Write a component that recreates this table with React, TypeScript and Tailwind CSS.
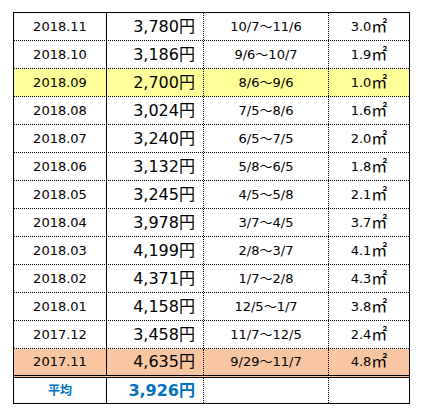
import React from "react";

type Row = { m: string; yen: string; range: string; area: string; bg?: string };

const rows: Row[] = [
  { m: "2018.11", yen: "3,780", range: "10/7～11/6", area: "3.0" },
  { m: "2018.10", yen: "3,186", range: "9/6～10/7", area: "1.9" },
  { m: "2018.09", yen: "2,700", range: "8/6～9/6", area: "1.0", bg: "y" },
  { m: "2018.08", yen: "3,024", range: "7/5～8/6", area: "1.6" },
  { m: "2018.07", yen: "3,240", range: "6/5～7/5", area: "2.0" },
  { m: "2018.06", yen: "3,132", range: "5/8～6/5", area: "1.8" },
  { m: "2018.05", yen: "3,245", range: "4/5～5/8", area: "2.1" },
  { m: "2018.04", yen: "3,978", range: "3/7～4/5", area: "3.7" },
  { m: "2018.03", yen: "4,199", range: "2/8～3/7", area: "4.1" },
  { m: "2018.02", yen: "4,371", range: "1/7～2/8", area: "4.3" },
  { m: "2018.01", yen: "4,158", range: "12/5～1/7", area: "3.8" },
  { m: "2017.12", yen: "3,458", range: "11/7～12/5", area: "2.4" },
  { m: "2017.11", yen: "4,635", range: "9/29～11/7", area: "4.8", bg: "o" },
];

export default function App() {
  return (
    <div className="w-[423px] h-[417px] bg-white pt-[12px] pl-[13px] font-['DejaVu_Sans','Noto_Sans_CJK_JP',sans-serif] text-black">
      <div className="w-[397px] border border-black">
        {rows.map((r, i) => {
          const last = i === rows.length - 1;
          const bg = r.bg === "y" ? "bg-[#ffff99]" : r.bg === "o" ? "bg-[#f8c6a0]" : "bg-white";
          return (
            <div
              key={r.m}
              className={`flex ${bg} ${last ? "h-[29px] border-b-[3px] border-double border-black" : "h-[28px] border-b border-dotted border-black"}`}
            >
              <div className="w-[93px] border-r border-black flex items-center justify-center text-[13px]">{r.m}</div>
              <div className="w-[97px] border-r border-dotted border-black flex items-center justify-end pr-[8px] text-[16px]">
                {r.yen}円
              </div>
              <div className="w-[125px] border-r border-dotted border-black flex items-center justify-center text-[13px]">
                {r.range}
              </div>
              <div className="flex-1 flex items-center justify-center text-[13px]">
                {r.area}
                <span className="text-[16px] leading-none">㎡</span>
              </div>
            </div>
          );
        })}
        <div className="flex h-[25px] bg-white">
          <div className="w-[93px] border-r border-black flex items-center justify-center text-[12px] font-bold text-[#0070c0]">平均</div>
          <div className="w-[97px] border-r border-dotted border-black flex items-center justify-end pr-[8px] text-[16px] font-bold text-[#0070c0]">
            3,926円
          </div>
          <div className="w-[125px] border-r border-dotted border-black"></div>
          <div className="flex-1"></div>
        </div>
      </div>
    </div>
  );
}
